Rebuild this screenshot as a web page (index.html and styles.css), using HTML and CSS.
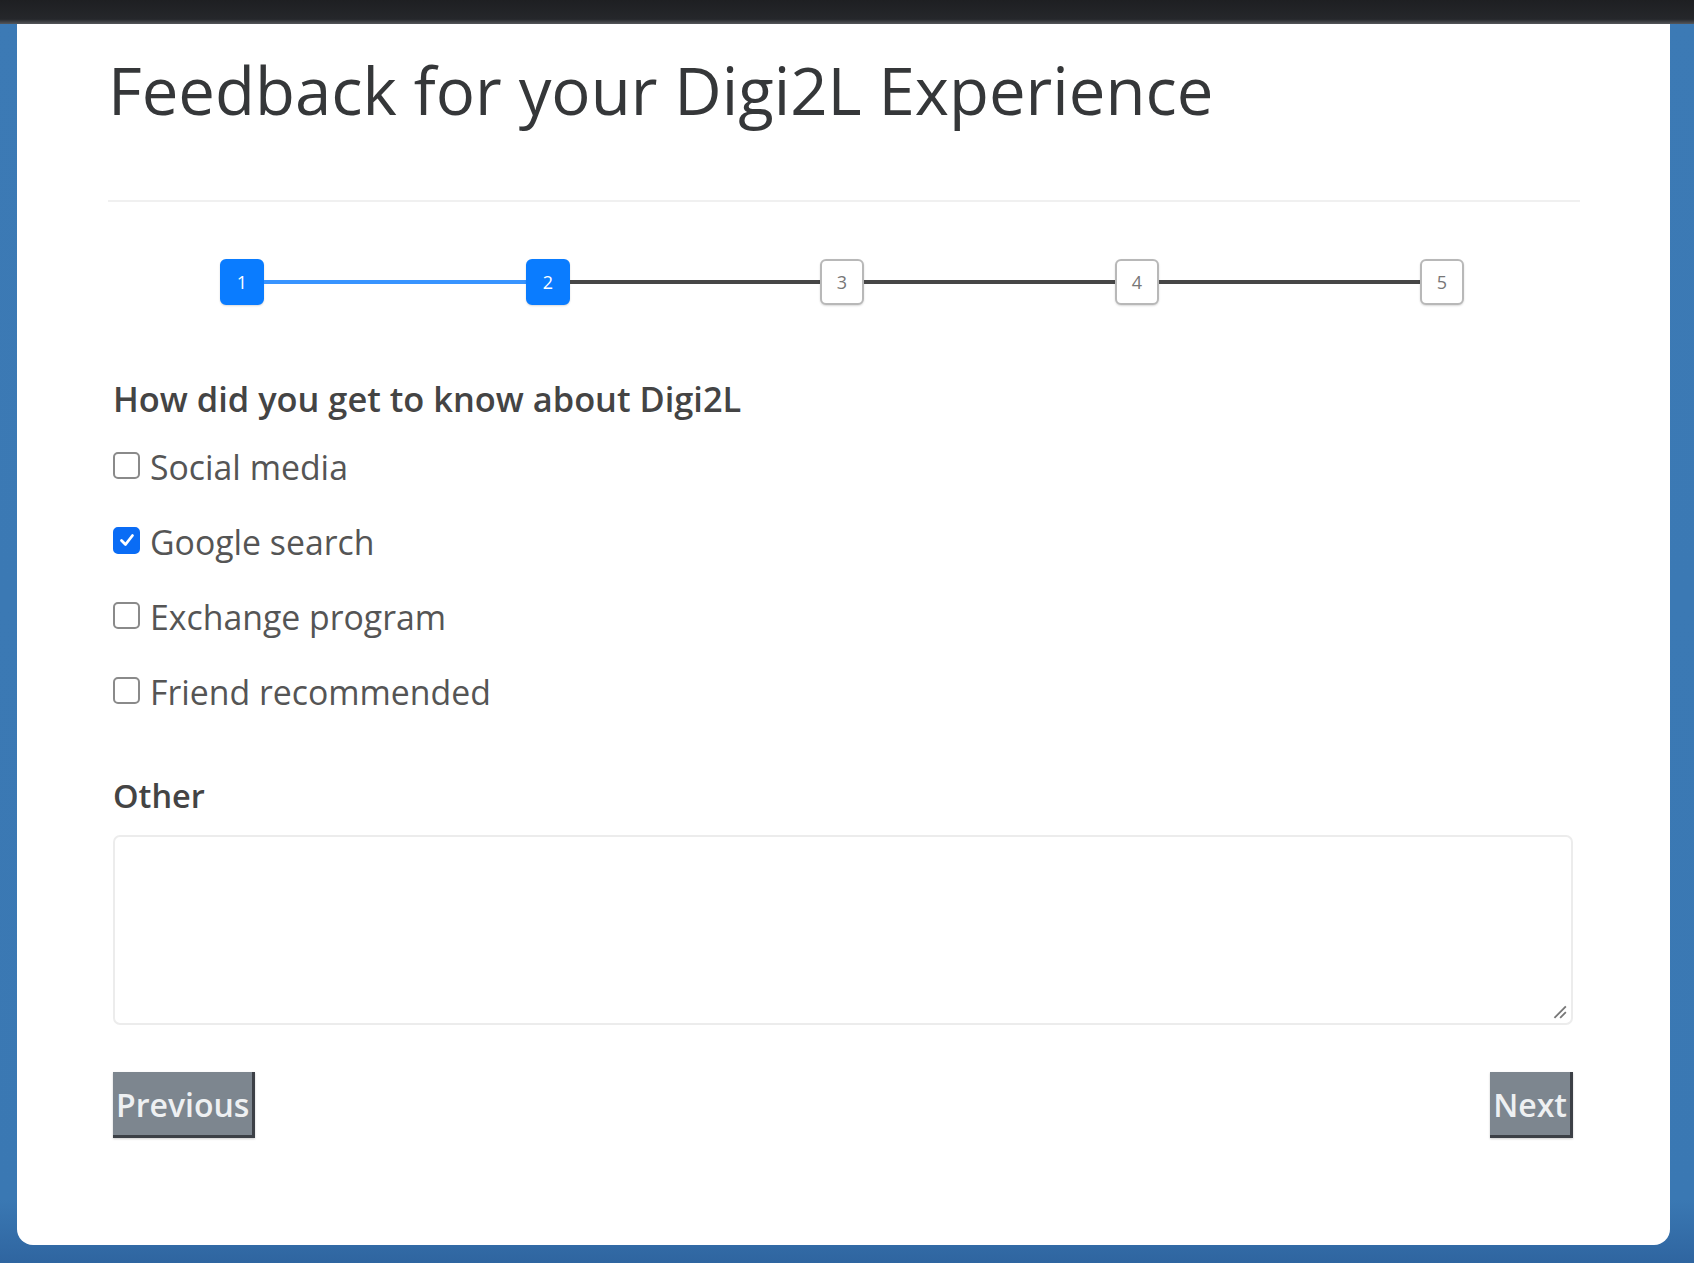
FILE: index.html
```html
<!DOCTYPE html>
<html lang="en">
<head>
<meta charset="utf-8">
<title>Feedback</title>
<link rel="stylesheet" href="styles.css">
</head>
<body>
<div class="topbar"></div>
<main class="card">
  <h1 class="title">Feedback for your Digi2L Experience</h1>
  <hr class="rule">
  <div class="stepper">
    <span class="step active">1</span>
    <span class="line done l1"></span>
    <span class="step active">2</span>
    <span class="line l2"></span>
    <span class="step">3</span>
    <span class="line l3"></span>
    <span class="step">4</span>
    <span class="line l4"></span>
    <span class="step">5</span>
  </div>
  <form class="form">
    <p class="question">How did you get to know about Digi2L</p>
    <div class="options">
      <label class="option"><span class="box"></span>Social media</label>
      <label class="option"><span class="box checked"><svg viewBox="0 0 20 20" width="20" height="20"><path d="M4.5 10.5 L8.5 14.5 L15.5 5.5" fill="none" stroke="#fff" stroke-width="2.8" stroke-linecap="round" stroke-linejoin="round"/></svg></span>Google search</label>
      <label class="option"><span class="box"></span>Exchange program</label>
      <label class="option"><span class="box"></span>Friend recommended</label>
    </div>
    <p class="other-label">Other</p>
    <div class="textarea">
      <svg class="grip" viewBox="0 0 14 14" width="16" height="16"><path d="M3 13 L13 3 M8 13 L13 8" stroke="#777" stroke-width="1.6" fill="none"/></svg>
    </div>
    <div class="buttons">
      <span class="btn">Previous</span>
      <span class="btn">Next</span>
    </div>
  </form>
</main>
</body>
</html>
```
FILE: styles.css
```css
html, body {
  margin: 0;
  padding: 0;
}
body {
  width: 1694px;
  height: 1263px;
  overflow: hidden;
  background: linear-gradient(180deg, #3c7ab5 0%, #3a78b3 95%, #2f65a0 100%);
  font-family: "Open Sans", "Noto Sans", sans-serif;
}
.topbar {
  height: 24px;
  background: linear-gradient(180deg, #1e1f22 0%, #25272b 80%, #55575b 100%);
}
.card {
  margin-left: 17px;
  width: 1653px;
  height: 1221px;
  box-sizing: border-box;
  background: #fff;
  border-radius: 0 0 16px 16px;
  padding: 26px 90px 0 91px;
  display: flex;
  flex-direction: column;
}
.title {
  margin: 0;
  font-size: 65.3px;
  line-height: 80px;
  font-weight: 500;
  color: #353739;
  letter-spacing: 0;
}
.rule {
  margin: 70px 0 0 0;
  border: 0;
  border-top: 2px solid #f0f0f0;
  width: 1472px;
}
.stepper {
  display: flex;
  align-items: center;
  margin: 57px 0 0 112px;
}
.step {
  width: 44px;
  height: 46px;
  flex: none;
  box-sizing: border-box;
  border: 2px solid #b8b8b8;
  border-radius: 6px;
  background: #fff;
  color: #777;
  font-size: 18px;
  display: flex;
  align-items: center;
  justify-content: center;
  box-shadow: 0 1px 2px rgba(0,0,0,0.15);
}
.step.active {
  background: #0a7cff;
  border-color: #0a7cff;
  color: #fff;
}
.line {
  height: 4px;
  flex: none;
  background: #464646;
}
.l1 { width: 262px; }
.l2 { width: 250px; }
.l3 { width: 251px; }
.l4 { width: 261px; }
.line.done {
  background: #3894ff;
}
.form {
  display: flex;
  flex-direction: column;
  padding-left: 5px;
}
.question {
  margin: 74px 0 0 0;
  font-size: 34.4px;
  font-weight: 600;
  color: #444;
  line-height: 40px;
}
.options {
  display: flex;
  flex-direction: column;
  gap: 35px;
  margin-top: 28px;
}
.option {
  display: flex;
  align-items: center;
  gap: 10px;
  font-size: 33.8px;
  color: #555;
  line-height: 40px;
}
.box {
  width: 27px;
  height: 27px;
  box-sizing: border-box;
  border: 2px solid #8a8a8a;
  border-radius: 5px;
  background: #fff;
  display: flex;
  align-items: center;
  justify-content: center;
  margin-top: -4px;
}
.box.checked {
  background: #0a6cf5;
  border-color: #0a6cf5;
}
.other-label {
  margin: 64px 0 0 0;
  font-size: 32.5px;
  font-weight: 600;
  color: #444;
  line-height: 40px;
}
.textarea {
  margin-top: 19px;
  width: 1460px;
  height: 190px;
  box-sizing: border-box;
  border: 2px solid #ececec;
  border-radius: 7px;
  position: relative;
}
.grip {
  position: absolute;
  right: 4px;
  bottom: 4px;
}
.buttons {
  display: flex;
  justify-content: space-between;
  width: 1460px;
  margin-top: 47px;
}
.btn {
  background: #7d868f;
  color: #eef0f2;
  font-size: 32px;
  font-weight: 600;
  height: 66px;
  line-height: 66px;
  padding: 0 3px;
  box-sizing: border-box;
  border-right: 3px solid #3c4046;
  border-bottom: 3px solid #3c4046;
  box-shadow: 0 1px 2px rgba(0,0,0,0.2);
}
```
